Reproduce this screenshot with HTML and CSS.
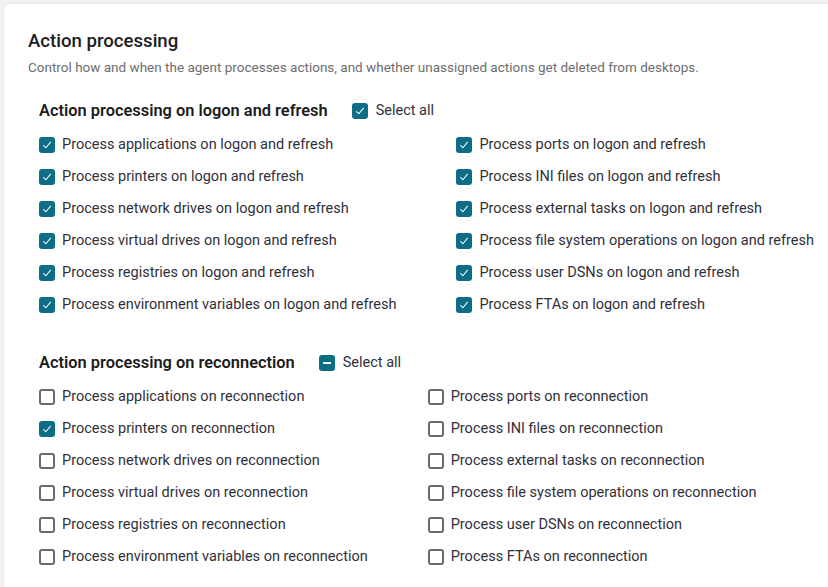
FILE: index.html
```html
<!DOCTYPE html>
<html>
<head>
<meta charset="utf-8">
<link rel="stylesheet" href="styles.css">
</head>
<body>
<div class="card">
  <h1 class="title">Action processing</h1>
  <p class="desc">Control how and when the agent processes actions, and whether unassigned actions get deleted from desktops.</p>

  <section class="group">
    <div class="group-head">
      <h2 class="group-title">Action processing on logon and refresh</h2>
      <label class="item"><span class="cb checked"></span>Select all</label>
    </div>
    <div class="grid">
      <label class="item"><span class="cb checked"></span>Process applications on logon and refresh</label>
      <label class="item"><span class="cb checked"></span>Process ports on logon and refresh</label>
      <label class="item"><span class="cb checked"></span>Process printers on logon and refresh</label>
      <label class="item"><span class="cb checked"></span>Process INI files on logon and refresh</label>
      <label class="item"><span class="cb checked"></span>Process network drives on logon and refresh</label>
      <label class="item"><span class="cb checked"></span>Process external tasks on logon and refresh</label>
      <label class="item"><span class="cb checked"></span>Process virtual drives on logon and refresh</label>
      <label class="item"><span class="cb checked"></span>Process file system operations on logon and refresh</label>
      <label class="item"><span class="cb checked"></span>Process registries on logon and refresh</label>
      <label class="item"><span class="cb checked"></span>Process user DSNs on logon and refresh</label>
      <label class="item"><span class="cb checked"></span>Process environment variables on logon and refresh</label>
      <label class="item"><span class="cb checked"></span>Process FTAs on logon and refresh</label>
    </div>
  </section>

  <section class="group second">
    <div class="group-head">
      <h2 class="group-title">Action processing on reconnection</h2>
      <label class="item"><span class="cb mixed"></span>Select all</label>
    </div>
    <div class="grid">
      <label class="item"><span class="cb"></span>Process applications on reconnection</label>
      <label class="item"><span class="cb"></span>Process ports on reconnection</label>
      <label class="item"><span class="cb checked"></span>Process printers on reconnection</label>
      <label class="item"><span class="cb"></span>Process INI files on reconnection</label>
      <label class="item"><span class="cb"></span>Process network drives on reconnection</label>
      <label class="item"><span class="cb"></span>Process external tasks on reconnection</label>
      <label class="item"><span class="cb"></span>Process virtual drives on reconnection</label>
      <label class="item"><span class="cb"></span>Process file system operations on reconnection</label>
      <label class="item"><span class="cb"></span>Process registries on reconnection</label>
      <label class="item"><span class="cb"></span>Process user DSNs on reconnection</label>
      <label class="item"><span class="cb"></span>Process environment variables on reconnection</label>
      <label class="item"><span class="cb"></span>Process FTAs on reconnection</label>
    </div>
  </section>
</div>
</body>
</html>
```

FILE: styles.css
```css
html, body {
  margin: 0;
  padding: 0;
  background: #f2f2f2;
  overflow: hidden;
  height: 100%;
}
body {
  font-family: Roboto, "Liberation Sans", Arial, sans-serif;
  color: #2b2b2b;
}
.card {
  margin: 4px 0 0 4px;
  width: 860px;
  min-height: 620px;
  background: #fff;
  border-radius: 6px 0 0 0;
  box-shadow: 0 0 3px rgba(0,0,0,0.08);
  padding: 25px 0 0 24px;
  box-sizing: border-box;
}
.title {
  margin: 0;
  font-size: 18.6px;
  line-height: 24px;
  font-weight: 500;
  color: #1c1c1c;
}
.desc {
  margin: 5px 0 0 0;
  font-size: 13.5px;
  line-height: 18px;
  color: #6e6e6e;
}
.group {
  margin: 24px 0 0 11px;
}
.group.second {
  margin-top: 31px;
}
.group-head {
  display: flex;
  align-items: center;
  gap: 24px;
  height: 22px;
}
.group-title {
  margin: 0;
  font-size: 16.4px;
  line-height: 22px;
  font-weight: 600;
  color: #1c1c1c;
}
.grid {
  margin-top: 7px;
  display: grid;
  grid-template-columns: max-content max-content;
  column-gap: 60px;
  grid-auto-rows: 32px;
}
.item {
  display: flex;
  align-items: center;
  gap: 7px;
  font-size: 14.5px;
  line-height: 18px;
  color: #30303a;
}
.group-head .item {
  gap: 8px;
}
.cb {
  width: 16px;
  height: 16px;
  box-sizing: border-box;
  border: 2px solid #6b6b6b;
  border-radius: 3px;
  flex: none;
  position: relative;
  background: #fff;
}
.cb.checked, .cb.mixed {
  background: #0c6e84;
  border-color: #0c6e84;
}
.cb.checked::after {
  content: "";
  position: absolute;
  left: 4px;
  top: 1px;
  width: 3px;
  height: 7px;
  border: solid #fff;
  border-width: 0 1.6px 1.6px 0;
  transform: rotate(40deg);
}
.cb.mixed::after {
  content: "";
  position: absolute;
  left: 2px;
  top: 5px;
  width: 8px;
  height: 2px;
  background: #fff;
}
```
